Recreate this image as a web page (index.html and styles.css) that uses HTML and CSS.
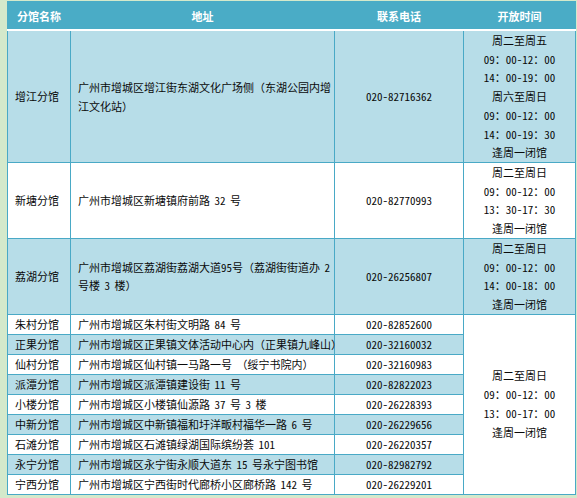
FILE: index.html
```html
<!DOCTYPE html>
<html lang="zh-CN">
<head>
<meta charset="utf-8">
<title>分馆列表</title>
<link rel="stylesheet" href="styles.css">
</head>
<body>
<span class="marker"></span>
<table class="libs">
  <colgroup>
    <col class="c-name"><col class="c-addr"><col class="c-tel"><col class="c-time">
  </colgroup>
  <thead>
    <tr><th>分馆名称</th><th>地址</th><th>联系电话</th><th>开放时间</th></tr>
  </thead>
  <tbody>
    <tr class="shade r7">
      <td class="name">增江分馆</td>
      <td class="addr">广州市增城区增江街东湖文化广场侧（东湖公园内增<br>江文化站）</td>
      <td class="tel">020-82716362</td>
      <td class="time">周二至周五<br>09：00-12：00<br>14：00-19：00<br>周六至周日<br>09：00-12：00<br>14：00-19：30<br>逢周一闭馆</td>
    </tr>
    <tr class="r4">
      <td class="name">新塘分馆</td>
      <td class="addr">广州市增城区新塘镇府前路 32 号</td>
      <td class="tel">020-82770993</td>
      <td class="time">周二至周日<br>09：00-12：00<br>13：30-17：30<br>逢周一闭馆</td>
    </tr>
    <tr class="shade r4">
      <td class="name">荔湖分馆</td>
      <td class="addr">广州市增城区荔湖街荔湖大道95号（荔湖街街道办 2<br>号楼 3 楼）</td>
      <td class="tel">020-26256807</td>
      <td class="time">周二至周日<br>09：00-12：00<br>14：00-18：00<br>逢周一闭馆</td>
    </tr>
    <tr class="r1">
      <td class="name">朱村分馆</td>
      <td class="addr">广州市增城区朱村街文明路 84 号</td>
      <td class="tel">020-82852600</td>
      <td class="time" rowspan="9">周二至周日<br>09：00-12：00<br>13：00-17：00<br>逢周一闭馆</td>
    </tr>
    <tr class="shade r1">
      <td class="name">正果分馆</td>
      <td class="addr">广州市增城区正果镇文体活动中心内（正果镇九峰山）</td>
      <td class="tel">020-32160032</td>
    </tr>
    <tr class="r1">
      <td class="name">仙村分馆</td>
      <td class="addr">广州市增城区仙村镇一马路一号 （绥宁书院内）</td>
      <td class="tel">020-32160983</td>
    </tr>
    <tr class="shade r1">
      <td class="name">派潭分馆</td>
      <td class="addr">广州市增城区派潭镇建设街 11 号</td>
      <td class="tel">020-82822023</td>
    </tr>
    <tr class="r1">
      <td class="name">小楼分馆</td>
      <td class="addr">广州市增城区小楼镇仙源路 37 号 3 楼</td>
      <td class="tel">020-26228393</td>
    </tr>
    <tr class="shade r1">
      <td class="name">中新分馆</td>
      <td class="addr">广州市增城区中新镇福和圩洋畈村福华一路 6 号</td>
      <td class="tel">020-26229656</td>
    </tr>
    <tr class="r1">
      <td class="name">石滩分馆</td>
      <td class="addr">广州市增城区石滩镇绿湖国际缤纷荟 101</td>
      <td class="tel">020-26220357</td>
    </tr>
    <tr class="shade r1">
      <td class="name">永宁分馆</td>
      <td class="addr">广州市增城区永宁街永顺大道东 15 号永宁图书馆</td>
      <td class="tel">020-82982792</td>
    </tr>
    <tr class="r1">
      <td class="name">宁西分馆</td>
      <td class="addr">广州市增城区宁西街时代廊桥小区廊桥路 142 号</td>
      <td class="tel">020-26229201</td>
    </tr>
  </tbody>
</table>
</body>
</html>
```
FILE: styles.css
```css
html, body {
  background: #d4e9cb;
}
body {
  margin: 1px 0 0 7px;
  font-family: "Noto Sans Mono CJK SC", "Noto Sans CJK SC", sans-serif;
  font-size: 11px;
  color: #0a0a0a;
  position: relative;
}
.marker {
  position: absolute;
  left: -6px;
  top: 420px;
  width: 0;
  height: 0;
  border-left: 3px solid transparent;
  border-right: 3px solid transparent;
  border-top: 3px solid #9aa89a;
}
.libs {
  border-collapse: collapse;
  table-layout: fixed;
  width: 568px;
  background: #fff;
}
.c-name { width: 63px; }
.c-addr { width: 264px; }
.c-tel { width: 129px; }
.c-time { width: 112px; }

.libs th {
  background: #4aacc6;
  color: #fff;
  font-weight: bold;
  font-size: 11px;
  height: 27px;
  padding: 0;
  border: 1px solid #4aacc6;
  border-bottom: 2px solid #fff;
  text-align: center;
  font-family: "Noto Sans CJK SC", sans-serif;
}
.libs td {
  border: 1px solid #49a9c6;
  padding: 0 3px 0 7px;
  line-height: 18.72px;
  vertical-align: middle;
  white-space: nowrap;
}
.addr {
  word-spacing: -1px;
}
.shade td {
  background: #b7dde8;
}
.libs td.time {
  background: #fff;
}
.shade td.time {
  background: #b7dde8;
}
.libs td.tel,
.libs td.time {
  text-align: center;
  padding: 0;
}
.r1 td {
  height: 19px;
  line-height: 19px;
}
```
